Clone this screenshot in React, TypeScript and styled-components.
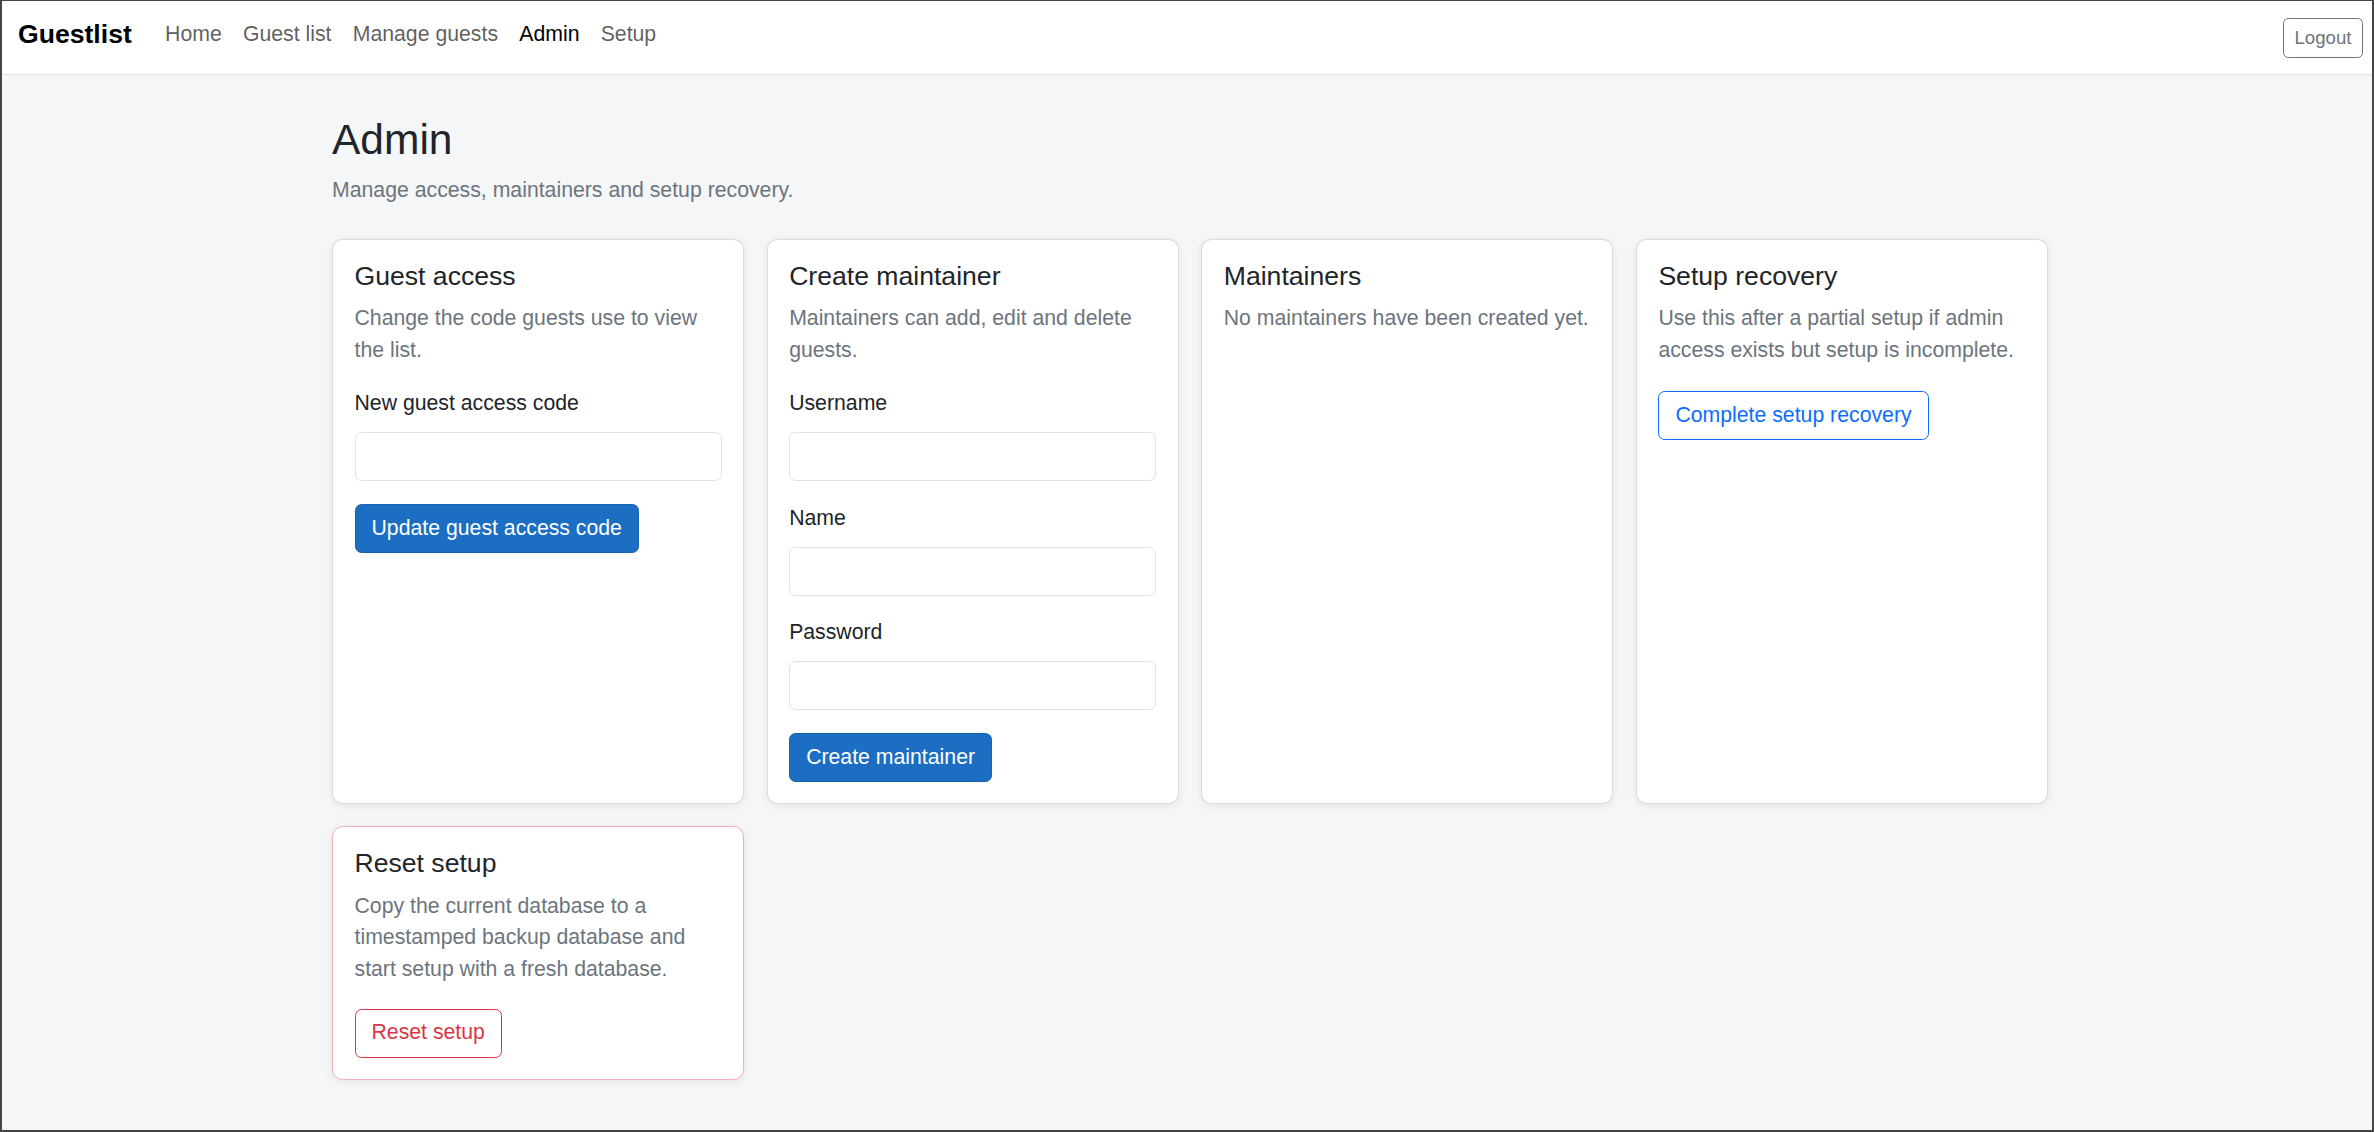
import React from "react";
import styled, { createGlobalStyle } from "styled-components";

const GlobalStyle = createGlobalStyle`
  *, *::before, *::after { box-sizing: border-box; }
  html, body { margin: 0; padding: 0; height: 100%; }
  body {
    font-family: "Liberation Sans", Arial, Helvetica, sans-serif;
    font-size: 21.25px;
    line-height: 1.5;
    color: #212529;
    background: #f5f6f8;
  }
`;

const Frame = styled.div`
  height: 100vh;
  overflow: hidden;
  background: #f5f6f8;
  border-style: solid;
  border-color: #454545;
  border-width: 1px 2px 2px 2px;
`;

const NavBar = styled.nav`
  height: 74px;
  display: flex;
  align-items: center;
  padding: 0 9px 0 16px;
  background: #ffffff;
  border-bottom: 1px solid #dee2e6;
`;

const Brand = styled.a`
  font-size: 26.6px;
  font-weight: 700;
  color: #000000;
  text-decoration: none;
  margin-right: 22.7px;
  line-height: 1.5;
  margin-top: -6px;
`;

const NavList = styled.ul`
  display: flex;
  list-style: none;
  margin: -6px 0 0 0;
  padding: 0;
`;

const NavLink = styled.a<{ $active?: boolean }>`
  display: block;
  padding: 0 10.6px;
  font-size: 21.25px;
  line-height: 1.5;
  text-decoration: none;
  color: ${(p) => (p.$active ? "#000000" : "rgba(0, 0, 0, 0.65)")};
`;

const LogoutButton = styled.button`
  margin-left: auto;
  height: 40px;
  padding: 0 10.6px;
  font-family: inherit;
  font-size: 18.6px;
  line-height: 1.5;
  color: #6c757d;
  background: transparent;
  border: 1px solid #6c757d;
  border-radius: 5.3px;
`;

const Main = styled.main`
  padding: 39px 0 0 6px;
`;

const Container = styled.div`
  width: 1716px;
  margin: 0 auto;
`;

const PageTitle = styled.h1`
  margin: 0 0 10px 0;
  font-size: 42.5px;
  font-weight: 500;
  line-height: 1.2;
  color: #212529;
`;

const Lead = styled.p`
  margin: 0 0 32px 0;
  color: #6c757d;
`;

const CardGrid = styled.div`
  display: grid;
  grid-template-columns: repeat(4, 1fr);
  column-gap: 22.5px;
  row-gap: 22px;
`;

const Card = styled.section<{ $danger?: boolean }>`
  background: #ffffff;
  border: 1px solid ${(p) => (p.$danger ? "#f1aeb5" : "rgba(0, 0, 0, 0.14)")};
  border-radius: 10.6px;
  box-shadow: 0 2px 8px rgba(0, 0, 0, 0.075);
  padding: 21px 21.5px;
`;

const CardTitle = styled.h5`
  margin: 0 0 10.6px 0;
  font-size: 26.6px;
  font-weight: 500;
  line-height: 1.2;
  color: #212529;
`;

const Description = styled.p<{ $gap?: number }>`
  margin: 0 0 ${(p) => p.$gap ?? 21.25}px 0;
  color: #6c757d;
`;

const Field = styled.div<{ $last?: boolean }>`
  margin-bottom: ${(p) => (p.$last ? 23 : 21.5)}px;
`;

const Label = styled.label`
  display: block;
  margin-bottom: 12px;
  color: #212529;
`;

const TextInput = styled.input`
  display: block;
  width: 100%;
  height: 49px;
  padding: 0 16px;
  font-family: inherit;
  font-size: 21.25px;
  color: #212529;
  background: #ffffff;
  border: 1px solid #dee2e6;
  border-radius: 6.6px;
  outline: none;
`;

const Button = styled.button<{ $variant: "primary" | "outline-primary" | "outline-danger" }>`
  display: inline-block;
  height: 49px;
  padding: 0 16px;
  font-family: inherit;
  font-size: 21.25px;
  line-height: 1.5;
  border-radius: 6.6px;
  border: 1px solid;
  cursor: pointer;
  ${(p) =>
    p.$variant === "primary"
      ? `color: #ffffff; background: #1b6ec2; border-color: #1861ac;`
      : p.$variant === "outline-primary"
      ? `color: #0d6efd; background: transparent; border-color: #0d6efd;`
      : `color: #dc3545; background: transparent; border-color: #dc3545;`}
`;

const navItems = ["Home", "Guest list", "Manage guests", "Admin", "Setup"];

export default function App() {
  return (
    <>
      <GlobalStyle />
      <Frame>
        <NavBar>
          <Brand href="#">Guestlist</Brand>
          <NavList>
            {navItems.map((item) => (
              <li key={item}>
                <NavLink href="#" $active={item === "Admin"}>
                  {item}
                </NavLink>
              </li>
            ))}
          </NavList>
          <LogoutButton type="button">Logout</LogoutButton>
        </NavBar>
        <Main>
          <Container>
            <PageTitle>Admin</PageTitle>
            <Lead>Manage access, maintainers and setup recovery.</Lead>
            <CardGrid>
              <Card>
                <CardTitle>Guest access</CardTitle>
                <Description>Change the code guests use to view the list.</Description>
                <Field $last>
                  <Label htmlFor="guest-code">New guest access code</Label>
                  <TextInput id="guest-code" type="text" />
                </Field>
                <Button type="button" $variant="primary">
                  Update guest access code
                </Button>
              </Card>
              <Card>
                <CardTitle>Create maintainer</CardTitle>
                <Description>Maintainers can add, edit and delete guests.</Description>
                <Field>
                  <Label htmlFor="m-username">Username</Label>
                  <TextInput id="m-username" type="text" />
                </Field>
                <Field>
                  <Label htmlFor="m-name">Name</Label>
                  <TextInput id="m-name" type="text" />
                </Field>
                <Field $last>
                  <Label htmlFor="m-password">Password</Label>
                  <TextInput id="m-password" type="password" />
                </Field>
                <Button type="button" $variant="primary">
                  Create maintainer
                </Button>
              </Card>
              <Card>
                <CardTitle>Maintainers</CardTitle>
                <Description>No maintainers have been created yet.</Description>
              </Card>
              <Card>
                <CardTitle>Setup recovery</CardTitle>
                <Description $gap={24}>
                  Use this after a partial setup if admin access exists but setup is incomplete.
                </Description>
                <Button type="button" $variant="outline-primary">
                  Complete setup recovery
                </Button>
              </Card>
              <Card $danger>
                <CardTitle>Reset setup</CardTitle>
                <Description $gap={22.5}>
                  Copy the current database to a timestamped backup database and start setup
                  with a fresh database.
                </Description>
                <Button type="button" $variant="outline-danger">
                  Reset setup
                </Button>
              </Card>
            </CardGrid>
          </Container>
        </Main>
      </Frame>
    </>
  );
}
